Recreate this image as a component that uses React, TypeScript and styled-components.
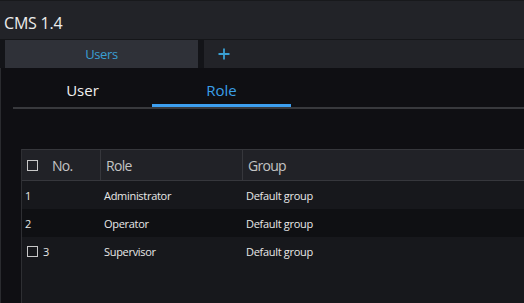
import React from 'react';
import styled, { createGlobalStyle } from 'styled-components';

const GlobalStyle = createGlobalStyle`
  html, body {
    margin: 0;
    padding: 0;
    background: #0f0f13;
  }
  body {
    font-family: "Open Sans", "Noto Sans", sans-serif;
    color: #e6e6e6;
  }
`;

const Page = styled.div`
  height: 303px;
  display: flex;
  flex-direction: column;
  overflow: hidden;
  background: #0f0f13;
`;

const TitleBar = styled.div`
  height: 40px;
  flex-shrink: 0;
  background: #222328;
  border-top: 1px solid #18191c;
  border-bottom: 1px solid #151619;
  box-sizing: border-box;
  padding: 12px 0 0 4px;
  font-size: 16px;
  line-height: 20px;
  color: #ececec;
  letter-spacing: -0.2px;
`;

const TabStrip = styled.div`
  height: 28px;
  flex-shrink: 0;
  display: flex;
  gap: 6px;
  padding-left: 5px;
  background: #131418;
`;

const PageTab = styled.div<{ active?: boolean }>`
  width: ${p => (p.active ? '193px' : 'auto')};
  flex: ${p => (p.active ? '0 0 auto' : '1')};
  display: flex;
  align-items: center;
  justify-content: ${p => (p.active ? 'center' : 'flex-start')};
  padding-left: ${p => (p.active ? '0' : '14px')};
  background: ${p => (p.active ? '#2f3138' : '#222328')};
  color: #3a9fd2;
  font-size: 13px;
  letter-spacing: -0.4px;
`;

const Content = styled.div`
  flex: 1;
  display: flex;
  flex-direction: column;
  border-left: 1px solid #2a2b2f;
  min-height: 0;
`;

const SubTabs = styled.div`
  margin-left: 12px;
  display: flex;
  border-bottom: 2px solid #38393d;
`;

const SubTab = styled.div<{ active?: boolean }>`
  width: 139px;
  height: 39px;
  box-sizing: border-box;
  padding-top: 12px;
  text-align: center;
  font-size: 15px;
  line-height: 20px;
  color: ${p => (p.active ? '#3a9fe8' : '#f0f0f0')};
  border-bottom: 3px solid ${p => (p.active ? '#3d9ff0' : 'transparent')};
`;

const Table = styled.div`
  flex: 1;
  margin: 40px 0 0 20px;
  background: #17181c;
  border-top: 1px solid #36373c;
  border-left: 1px solid #2e2f33;
  display: flex;
  flex-direction: column;
`;

const Row = styled.div<{ head?: boolean; dark?: boolean }>`
  display: grid;
  grid-template-columns: 79px 142px 1fr;
  height: ${p => (p.head ? '30px' : '28px')};
  background: ${p => (p.head ? '#212227' : p.dark ? '#0f1013' : '#17181c')};
  border-bottom: ${p => (p.head ? '1px solid #36373c' : 'none')};
  font-size: ${p => (p.head ? '14px' : '11px')};
  letter-spacing: ${p => (p.head ? '-0.7px' : '-0.3px')};
  color: ${p => (p.head ? '#c4c4c4' : '#e8e8e8')};
`;

const Cell = styled.div<{ head?: boolean; inset?: number }>`
  display: flex;
  align-items: center;
  padding-left: ${p => (p.head ? 5 : p.inset ?? 3)}px;
  border-right: ${p => (p.head ? '1px solid #36373c' : 'none')};
  white-space: nowrap;
  &:last-child {
    border-right: none;
  }
`;

const Check = styled.span<{ gap?: number }>`
  width: 11px;
  height: 11px;
  box-sizing: border-box;
  border: 1px solid #c8c8c8;
  margin-right: ${p => p.gap ?? 5}px;
  flex-shrink: 0;
`;

const roles = [
  { no: 1, name: 'Administrator', group: 'Default group', check: false },
  { no: 2, name: 'Operator', group: 'Default group', check: false },
  { no: 3, name: 'Supervisor', group: 'Default group', check: true },
];

export default function App() {
  return (
    <Page>
      <GlobalStyle />
      <TitleBar>CMS 1.4</TitleBar>
      <TabStrip>
        <PageTab active>Users</PageTab>
        <PageTab>
          <svg width="12" height="12" viewBox="0 0 12 12">
            <path d="M6 0.5v11M0.5 6h11" stroke="#3a9fd2" strokeWidth="1.8" />
          </svg>
        </PageTab>
      </TabStrip>
      <Content>
        <SubTabs>
          <SubTab>User</SubTab>
          <SubTab active>Role</SubTab>
        </SubTabs>
        <Table>
          <Row head>
            <Cell head>
              <Check gap={14} />
              No.
            </Cell>
            <Cell head>Role</Cell>
            <Cell head>Group</Cell>
          </Row>
          {roles.map((r, i) => (
            <Row key={r.no} dark={i % 2 === 1}>
              <Cell inset={r.check ? 5 : 3}>
                {r.check && <Check />}
                {r.no}
              </Cell>
              <Cell>{r.name}</Cell>
              <Cell>{r.group}</Cell>
            </Row>
          ))}
        </Table>
      </Content>
    </Page>
  );
}
